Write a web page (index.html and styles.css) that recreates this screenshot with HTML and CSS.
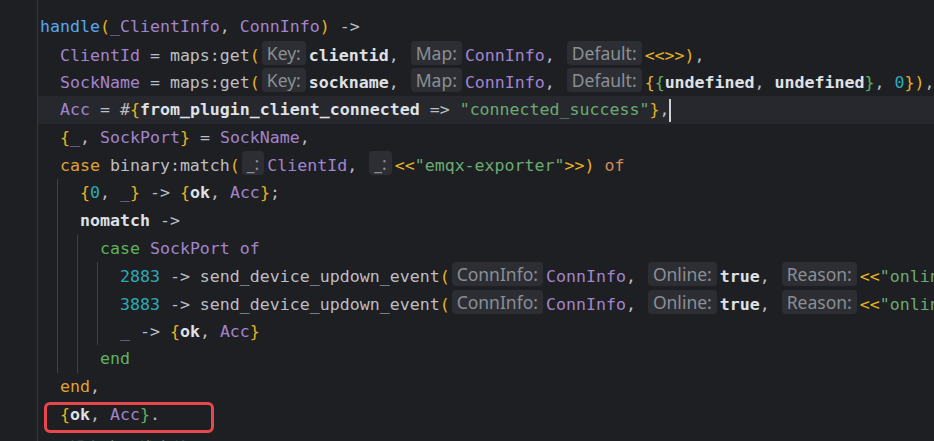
FILE: index.html
```html
<!DOCTYPE html>
<html lang="en">
<head>
    <meta charset="UTF-8">
    <title>emqx_exporter.erl</title>
    <link rel="stylesheet" href="styles.css">
</head>
<body>
    <div class="editor">
        <div class="gutter"></div>
        <div class="code">
            <div class="guide g1"></div>
            <div class="guide g2"></div>
            <div class="guide g3"></div>

            <div class="line"><span class="fn">handle</span><span class="b1">(</span><span class="v">_ClientInfo</span>, <span class="v">ConnInfo</span><span class="b1">)</span> -&gt;</div>
            <div class="line">  <span class="v">ClientId</span> = maps:get<span class="b1">(</span><span class="hint">Key:</span><span class="a">clientid</span>, <span class="hint">Map:</span><span class="v">ConnInfo</span>, <span class="hint">Default:</span><span class="b1">&lt;&lt;&gt;&gt;)</span>,</div>
            <div class="line">  <span class="v">SockName</span> = maps:get<span class="b1">(</span><span class="hint">Key:</span><span class="a">sockname</span>, <span class="hint">Map:</span><span class="v">ConnInfo</span>, <span class="hint">Default:</span><span class="b1">{</span><span class="b2">{</span><span class="a">undefined</span>, <span class="a">undefined</span><span class="b2">}</span>, <span class="n">0</span><span class="b1">})</span>,</div>
            <div class="line current">  <span class="v">Acc</span> = #<span class="b1">{</span><span class="a">from_plugin_client_connected</span> =&gt; <span class="s">"connected_success"</span><span class="b1">}</span>,<span class="cursor"></span></div>
            <div class="line">  <span class="b1">{</span><span class="v">_</span>, <span class="v">SockPort</span><span class="b1">}</span> = <span class="v">SockName</span>,</div>
            <div class="line">  <span class="k1">case</span> binary:match<span class="b1">(</span><span class="hint">_:</span><span class="v">ClientId</span>, <span class="hint">_:</span><span class="b1">&lt;&lt;</span><span class="s">"emqx-exporter"</span><span class="b1">&gt;&gt;)</span> <span class="of">of</span></div>
            <div class="line">    <span class="b1">{</span><span class="n">0</span>, <span class="v">_</span><span class="b1">}</span> -&gt; <span class="b1">{</span><span class="a">ok</span>, <span class="v">Acc</span><span class="b1">}</span>;</div>
            <div class="line">    <span class="a">nomatch</span> -&gt;</div>
            <div class="line">      <span class="k2">case</span> <span class="v">SockPort</span> <span class="v">of</span></div>
            <div class="line">        <span class="n">2883</span> -&gt; send_device_updown_event<span class="b1">(</span><span class="hint">ConnInfo:</span><span class="v">ConnInfo</span>, <span class="hint">Online:</span><span class="a">true</span>, <span class="hint">Reason:</span><span class="b1">&lt;&lt;</span><span class="s">"online"</span><span class="b1">&gt;&gt;)</span>;</div>
            <div class="line">        <span class="n">3883</span> -&gt; send_device_updown_event<span class="b1">(</span><span class="hint">ConnInfo:</span><span class="v">ConnInfo</span>, <span class="hint">Online:</span><span class="a">true</span>, <span class="hint">Reason:</span><span class="b1">&lt;&lt;</span><span class="s">"online"</span><span class="b1">&gt;&gt;)</span>;</div>
            <div class="line">        <span class="v">_</span> -&gt; <span class="b1">{</span><span class="a">ok</span>, <span class="v">Acc</span><span class="b1">}</span></div>
            <div class="line">      <span class="k2">end</span></div>
            <div class="line">  <span class="k1">end</span>,</div>
            <div class="line">  <span class="b1">{</span><span class="a">ok</span>, <span class="v">Acc</span><span class="b2">}</span>.<span class="mark"></span></div>
            <div class="line last"><span class="comment">%% 设备上下线事件</span></div>
        </div>
    </div>
</body>
</html>
```

FILE: styles.css
```css
* {
    margin: 0;
    padding: 0;
    box-sizing: border-box;
}

body {
    background: #1e1f22;
    overflow: hidden;
    height: 441px;
}

.editor {
    display: flex;
    height: 441px;
}

.gutter {
    width: 38px;
    flex-shrink: 0;
    border-right: 1px solid #35373c;
}

.code {
    position: relative;
    flex: 1;
    padding-top: 13px;
    font-family: "DejaVu Sans Mono", monospace;
    font-size: 16.6px;
    color: #bcbec4;
    overflow: hidden;
}

.line {
    position: relative;
    height: 27.7px;
    line-height: 27.7px;
    padding-left: 2px;
    white-space: pre;
}

.line.current {
    background: #26282d;
}

.line.last {
    padding-top: 7px;
}

.fn { color: #56a8f5; }
.v { color: #a285cf; }
.a { color: #dfe1e5; font-weight: bold; }
.s { color: #6aab73; }
.n { color: #2aacb8; }
.b1 { color: #e6b422; }
.b2 { color: #5fb35f; }
.k1 { color: #dfa235; }
.k2 { color: #5fb35f; }
.of { color: #d08a5c; }
.comment { color: #6f737a; }

.hint {
    display: inline-block;
    height: 24px;
    line-height: 24px;
    margin: 0 3px 0 2px;
    padding: 0 5px;
    border-radius: 4px;
    background: #2c2e33;
    color: #8b8e95;
    font-family: "Noto Sans", "Liberation Sans", sans-serif;
    font-size: 17.5px;
    vertical-align: 1px;
}

.cursor {
    display: inline-block;
    width: 2px;
    height: 23px;
    background: #ced0d6;
    vertical-align: middle;
}

.guide {
    position: absolute;
    width: 1px;
}

.g1 {
    left: 19px;
    top: 179px;
    height: 194px;
    background: #4d4428;
}

.g2 {
    left: 39px;
    top: 235px;
    height: 138px;
    background: #3e4045;
}

.g3 {
    left: 59px;
    top: 262px;
    height: 83px;
    background: #34473a;
}

.mark {
    position: absolute;
    left: 6px;
    top: 1px;
    width: 170px;
    height: 31px;
    border: 3px solid #e8484c;
    border-radius: 6px;
}
```
